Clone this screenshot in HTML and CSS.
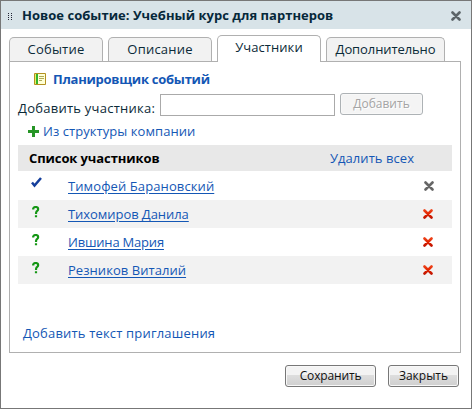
FILE: index.html
```html
<!DOCTYPE html>
<html lang="ru">
<head>
<meta charset="utf-8">
<title>Новое событие</title>
<link rel="stylesheet" href="styles.css">
</head>
<body>
<svg class="defs" width="0" height="0">
  <defs>
    <linearGradient id="red" x1="0" y1="0" x2="0" y2="10" gradientUnits="userSpaceOnUse"><stop offset="0" stop-color="#f04a20"/><stop offset=".5" stop-color="#e22400"/><stop offset="1" stop-color="#b81000"/></linearGradient>
    <symbol id="cross" viewBox="0 0 10 10"><path d="M1.500 1.500L8.500 8.500M8.500 1.500L1.500 8.500" fill="none" stroke-width="2.600" stroke-linecap="round"/></symbol>
    <symbol id="q" viewBox="0 0 12 12"><path d="M2.200 3.500V2.500Q2.700 1 4.700 1Q7.200 1 7.200 3Q7.200 4.300 5.700 5.300Q5 6 5 8M5 9.300v2" fill="none" stroke="#149614" stroke-width="2.200"/></symbol>
  </defs>
</svg>
<div class="dialog">
  <header class="titlebar">
    <svg class="grip" width="5" height="8" viewBox="0 0 5 8" shape-rendering="crispEdges"><path d="M0 0h1v1H0zM3 0h1v1H3zM0 2h1v1H0zM3 2h1v1H3zM0 4h1v1H0zM3 4h1v1H3zM0 6h1v1H0zM3 6h1v1H3z" fill="#223"/></svg>
    <h1 class="title">Новое событие: Учебный курс для партнеров</h1>
    <svg class="close" width="10" height="10" stroke="#5c6468"><use href="#cross"/></svg>
  </header>
  <nav class="tabs">
    <div class="tab tab-event"><span>Событие</span></div>
    <div class="tab tab-desc"><span>Описание</span></div>
    <div class="tab tab-people active"><span>Участники</span></div>
    <div class="tab tab-more"><span>Дополнительно</span></div>
  </nav>
  <main class="panel">
    <a class="planner">
      <svg width="12" height="12" viewBox="0 0 12 12"><path d="M.5.5h11v11H.5z" fill="#ffffd5" stroke="#b39120"/><path d="M2 1h2v10H2z" fill="#34b52c"/><path d="M1 1h1v10H1z" fill="#eaf06a"/><path d="M5 3.500h5M5 5.500h5M5 7.500h3" stroke="#b0aa58"/></svg>
      <span>Планировщик событий</span>
    </a>
    <div class="add">
      <label for="name">Добавить участника:</label>
      <input id="name" type="text">
      <button class="btn btn-add" disabled>Добавить</button>
    </div>
    <a class="structure">
      <svg width="11" height="11" viewBox="0 0 11 11" shape-rendering="crispEdges"><path d="M4 0h3v4h4v3H7v4H4V7H0V4h4z" fill="#269526"/></svg>
      <span>Из структуры компании</span>
    </a>
    <section class="list">
      <div class="list-head"><b>Список участников</b><a>Удалить всех</a></div>
      <div class="row first">
        <svg class="state" width="12" height="12" viewBox="0 0 12 12"><path d="M1 5.500l2.500 3L10 1" fill="none" stroke="#153f9c" stroke-width="2.500"/></svg>
        <a class="n1">Тимофей Барановский</a>
        <svg class="del" width="10" height="10" stroke="#666"><use href="#cross"/></svg>
      </div>
      <div class="row alt">
        <svg class="state" width="12" height="12"><use href="#q"/></svg>
        <a class="n2">Тихомиров Данила</a>
        <svg class="del" width="10" height="10" stroke="url(#red)"><use href="#cross"/></svg>
      </div>
      <div class="row">
        <svg class="state" width="12" height="12"><use href="#q"/></svg>
        <a class="n3">Ившина Мария</a>
        <svg class="del" width="10" height="10" stroke="url(#red)"><use href="#cross"/></svg>
      </div>
      <div class="row alt">
        <svg class="state" width="12" height="12"><use href="#q"/></svg>
        <a class="n4">Резников Виталий</a>
        <svg class="del" width="10" height="10" stroke="url(#red)"><use href="#cross"/></svg>
      </div>
    </section>
    <a class="invite">Добавить текст приглашения</a>
  </main>
  <footer class="actions">
    <button class="btn btn-save">Сохранить</button>
    <button class="btn btn-close">Закрыть</button>
  </footer>
</div>
</body>
</html>
```
FILE: styles.css
```css
* { box-sizing: border-box; }
body { margin: 0; background: #fff; font: 13px/18px "Open Sans", "Noto Sans", sans-serif; color: #0b2a38; white-space: nowrap; }
a { color: #1457b5; }
svg { flex: none; display: block; }
.defs { height: 0; }
.dialog { width: 472px; height: 409px; border: 1px solid #777; }
.titlebar { display: flex; align-items: center; height: 28px; background: #d8e3e8; padding: 0 10px 0 7px; }
.grip { margin-top: 4px; }
.title { margin: 0 0 0 9px; font-size: 13px; line-height: 18px; font-weight: 700; color: #06283a; letter-spacing: .03px; }
.close { margin: 2px 0 0 auto; }
.tabs { display: flex; align-items: flex-end; gap: 5px; height: 32px; padding-left: 8px; }
.tab { height: 24px; border: 1px solid #b0b0b0; border-bottom: 0; border-radius: 5px 5px 0 0; background: #f2f2f2; text-align: center; line-height: 22px; letter-spacing: .2px; }
.tab-event { width: 94px; }
.tab-desc { width: 104px; }
.tab-people { width: 104px; letter-spacing: .05px; }
.tab-more { width: 119px; letter-spacing: -.1px; }
.active { position: relative; height: 27px; margin-bottom: -1px; background: #fff; line-height: 22px; }
.panel { width: 452px; height: 292px; margin-left: 8px; border: 1px solid #b0b0b0; padding: 8px 8px 0; display: flex; flex-direction: column; align-items: flex-start; }
.planner { display: flex; align-items: center; gap: 7px; height: 18px; margin-left: 16px; font-weight: 700; letter-spacing: -.26px; }
.add { display: flex; height: 24px; margin-top: 5px; }
.add label { width: 142px; margin-top: 6px; letter-spacing: .25px; }
.add input { width: 175px; height: 22px; margin-top: 1px; border: 1px solid #aaa; padding: 2px; font: inherit; }
.btn { height: 22px; border: 1px solid #777; border-radius: 3px; padding: 0; font: 12px/18px "Open Sans", "Noto Sans", sans-serif; color: #111; background: linear-gradient(#f3f3f3 0 45%, #dedede 45%, #cfcfcf); box-shadow: inset 0 0 0 1px #f8f8f8; }
.btn-add { width: 83px; margin: 0 0 0 5px; border-color: #adb2b5; color: #a4a4a4; background: #f4f4f4; text-shadow: 1px 1px #fff; }
.structure { display: flex; align-items: center; gap: 4px; height: 18px; margin: 5px 0 0 10px; letter-spacing: .06px; }
.list { width: 434px; margin-top: 5px; }
.list-head { display: flex; align-items: center; justify-content: space-between; height: 26px; padding: 0 38px 0 11px; background: #e8e8e8; }
.list-head b { color: #000; letter-spacing: -.1px; }
.list-head a { letter-spacing: .05px; }
.row { display: flex; height: 28px; padding: 0 18px 0 13px; }
.first { height: 29px; }
.alt { background: #f2f2f2; }
.state { margin-top: 6px; }
.row a { margin: 5px 0 0 25px; text-decoration: underline; text-underline-offset: 2px; }
.row.first a { margin-top: 6px; }
.n1 { letter-spacing: .1px; }
.n2 { letter-spacing: -.06px; }
.n3 { letter-spacing: -.2px; }
.n4 { letter-spacing: .05px; }
.del { margin: 9px 1px 0 auto; }
.first .del { margin: 10px 0 0 auto; }
.invite { margin: 40px 0 0 5px; letter-spacing: .18px; }
.actions { display: flex; justify-content: flex-end; gap: 12px; padding: 12px 12px 0 0; }
.btn-save { width: 91px; letter-spacing: -.15px; }
.btn-close { width: 71px; }
```
